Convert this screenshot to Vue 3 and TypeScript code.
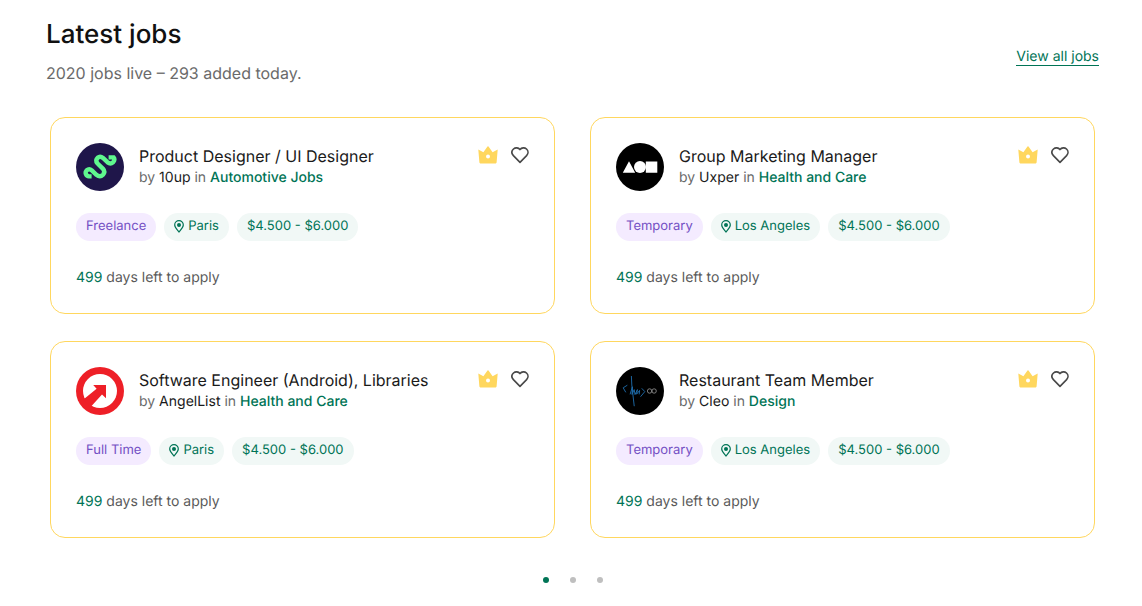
<script setup lang="ts">
import { ref } from 'vue'

type Logo = 'wave' | 'shapes' | 'arrow' | 'script'

interface Job {
  id: number
  logo: Logo
  title: string
  company: string
  category: string
  type: string
  city: string
  salary: string
  daysLeft: number
}

const jobs: Job[] = [
  { id: 1, logo: 'wave', title: 'Product Designer / UI Designer', company: '10up', category: 'Automotive Jobs', type: 'Freelance', city: 'Paris', salary: '$4.500 - $6.000', daysLeft: 499 },
  { id: 2, logo: 'shapes', title: 'Group Marketing Manager', company: 'Uxper', category: 'Health and Care', type: 'Temporary', city: 'Los Angeles', salary: '$4.500 - $6.000', daysLeft: 499 },
  { id: 3, logo: 'arrow', title: 'Software Engineer (Android), Libraries', company: 'AngelList', category: 'Health and Care', type: 'Full Time', city: 'Paris', salary: '$4.500 - $6.000', daysLeft: 499 },
  { id: 4, logo: 'script', title: 'Restaurant Team Member', company: 'Cleo', category: 'Design', type: 'Temporary', city: 'Los Angeles', salary: '$4.500 - $6.000', daysLeft: 499 },
]

const pages = [1, 2, 3]
const page = ref(1)
</script>

<template>
  <section class="jobs">
    <header class="head">
      <div>
        <h2>Latest jobs</h2>
        <p class="sub">2020 jobs live – 293 added today.</p>
      </div>
      <a class="all" href="#jobs">View all jobs</a>
    </header>

    <div class="grid">
      <article v-for="job in jobs" :key="job.id" class="card">
        <div class="top">
          <svg class="logo" viewBox="0 0 48 48" aria-hidden="true">
            <template v-if="job.logo === 'wave'">
              <circle cx="24" cy="24" r="24" fill="#1f164a" />
              <path d="M15.6 33.4H13A3.6 3.6 0 0 1 10.6 27.4Q13.2 25 15.8 27.4L20.4 31.8Q24 34.8 27 31.8Q29.6 28.8 27 25.8L21.6 20.6Q18.8 17.4 21.6 14.8Q24.2 12.6 27 15L31.4 19.2Q34.4 21.6 37 19.4Q39.4 16.6 37.6 14.4H32.6" fill="none" stroke="#5ff88e" stroke-width="4.4" />
            </template>
            <template v-else-if="job.logo === 'shapes'">
              <circle cx="24" cy="24" r="24" fill="#000" />
              <path d="M6.8 29.8L13 18.2L19.2 29.8ZM29.8 18.4H41.3V29.8H29.8Z" fill="#fff" />
              <circle cx="24" cy="24" r="6" fill="#fff" />
            </template>
            <template v-else-if="job.logo === 'arrow'">
              <circle cx="24" cy="24" r="24" fill="#ee1f27" />
              <circle cx="24" cy="24" r="17" fill="#fff" />
              <path d="M17.2 18H30V31.2L26 27.4L14.4 40.2L7.4 32.4L20.6 21.8Z" fill="#ee1f27" />
            </template>
            <template v-else>
              <circle cx="24" cy="24" r="24" fill="#000" />
              <g fill="none" stroke="#1f6fb0" stroke-width="0.9" stroke-linecap="round">
                <path d="M11 18.4L7.2 20.8L9.6 25" />
                <path d="M15.4 9.4L15.8 18L18.2 38.8" />
                <path d="M14.2 27L16.4 19.8L16 27.4L18.2 22.6L19 27.6L21.4 22.6L20.6 27.2L23.6 23.4L23.2 27" />
                <path d="M26 21.6L28.8 24.6L24.8 29.4" />
              </g>
              <g fill="none" stroke="#999" stroke-width="0.8">
                <circle cx="33.6" cy="24" r="2.2" />
                <circle cx="38.1" cy="24" r="2.2" />
              </g>
            </template>
          </svg>
          <div class="info">
            <h3>{{ job.title }}</h3>
            <p class="by">
              by <strong>{{ job.company }}</strong> in <a href="#category">{{ job.category }}</a>
            </p>
          </div>
          <div class="actions">
            <svg class="crown" viewBox="0 0 20 18" role="img" aria-label="Featured">
              <path fill="#ffd75e" fill-rule="evenodd" d="M.3 3.6L5.4 6.2L9.5.4Q10 0 10.5.4L14.6 6.2L19.7 3.6L18.6 16.6Q18.5 17.4 17.7 17.4H2.3Q1.5 17.4 1.4 16.6ZM10 8.4a2 2 0 1 0 0 4a2 2 0 0 0 0-4Z" />
            </svg>
            <button type="button" class="save" aria-label="Save job">
              <svg viewBox="0 0 18 18" aria-hidden="true">
                <path fill="none" stroke="#484848" stroke-width="1.6" stroke-linejoin="round" d="M9 3.6C7.4 1.6 4.5 1.2 2.5 3C.5 4.9.5 7.6 2.4 9.6L9 16.4L15.6 9.6C17.5 7.6 17.5 4.9 15.5 3C13.5 1.2 10.6 1.6 9 3.6Z" />
              </svg>
            </button>
          </div>
        </div>

        <div class="tags">
          <a class="tag type" href="#type">{{ job.type }}</a>
          <a class="tag" href="#city">
            <svg class="pin" viewBox="0 0 10 13" aria-hidden="true">
              <path fill="none" stroke="#007456" stroke-width="1.2" d="M5 12C3.6 10 .7 7.4.7 4.9a4.3 4.3 0 0 1 8.6 0C9.3 7.4 6.4 10 5 12Z" />
              <circle cx="5" cy="4.9" r="2" fill="#007456" />
            </svg>{{ job.city }}
          </a>
          <span class="tag">{{ job.salary }}</span>
        </div>

        <p class="days"><span>{{ job.daysLeft }}</span> days left to apply</p>
      </article>
    </div>

    <nav class="dots" aria-label="Pages">
      <button
        v-for="n in pages"
        :key="n"
        type="button"
        :class="{ active: n === page }"
        :aria-label="`Page ${n}`"
        @click="page = n"
      />
    </nav>
  </section>
</template>

<style>
body {
  margin: 0;
  background: #fff;
}
</style>

<style scoped>
.jobs {
  padding: 16px 43px 16px 46px;
  font-family: Inter, "Liberation Sans", sans-serif;
  text-rendering: geometricPrecision;
  color: #1a1a1a;
}
h2, h3, p {
  margin: 0;
}
a {
  color: #007456;
  text-decoration: none;
}
.head {
  display: flex;
  justify-content: space-between;
  align-items: center;
}
h2 {
  font-size: 26px;
  line-height: 38px;
  font-weight: 500;
  color: #111;
}
.sub {
  margin-top: 6px;
  font-size: 16px;
  line-height: 26px;
  font-weight: 400;
  color: #6a6a6a;
}
.all {
  margin-top: 12px;
  font-size: 14px;
  line-height: 17px;
  border-bottom: 1px solid #007456;
}
.grid {
  display: grid;
  grid-template-columns: 1fr 1fr;
  gap: 27px 35px;
  margin: 31px 4px 0;
}
.card {
  padding: 25px;
  border: 1px solid #ffd75e;
  border-radius: 15px;
}
.top {
  display: flex;
}
.logo {
  width: 48px;
  height: 48px;
  flex: none;
}
.info {
  flex: 1;
  margin-left: 15px;
  padding-top: 2px;
}
h3 {
  font-size: 16px;
  line-height: 22px;
  font-weight: 400;
}
.by {
  font-size: 14px;
  line-height: 22px;
  font-weight: 400;
  color: #6a6a6a;
}
.by strong {
  font-weight: 400;
  color: #1a1a1a;
}
.by a {
  font-weight: 500;
}
.actions {
  display: flex;
  gap: 13px;
  padding-top: 3px;
}
.crown {
  width: 20px;
  height: 18px;
}
.save {
  width: 18px;
  height: 18px;
  padding: 0;
  border: 0;
  background: none;
}
.save svg {
  display: block;
}
.tags {
  display: flex;
  gap: 8px;
  margin-top: 22px;
}
.tag {
  display: flex;
  align-items: center;
  padding: 0 10px 1px;
  border-radius: 14px;
  font-size: 13px;
  line-height: 27px;
  color: #007456;
  background: #f1f8f6;
}
.type {
  color: #7350c4;
  background: #f4ebff;
}
.pin {
  width: 10px;
  height: 13px;
  margin-right: 4px;
}
.days {
  margin-top: 26px;
  font-size: 14px;
  line-height: 21px;
  color: #5a5a5a;
}
.days span {
  color: #007456;
}
.dots {
  display: flex;
  justify-content: center;
  gap: 21px;
  margin-top: 39px;
}
.dots button {
  width: 6px;
  height: 6px;
  padding: 0;
  border: 0;
  border-radius: 50%;
  background: #bfbfbf;
}
.dots .active {
  background: #007456;
}
</style>
